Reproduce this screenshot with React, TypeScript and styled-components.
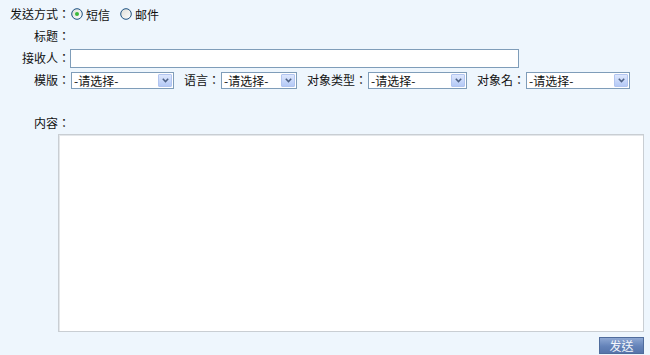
import styled, { createGlobalStyle } from 'styled-components';

const GlobalStyle = createGlobalStyle`
  html, body {
    margin: 0;
    padding: 0;
    background: #eef6fd;
  }
  body {
    font-family: 'Noto Sans CJK TC', 'Noto Sans CJK SC', 'Noto Sans', sans-serif;
    font-size: 12px;
    color: #111;
  }
`;

const Form = styled.form`
  width: 650px;
  height: 355px;
  padding-top: 3px;
  box-sizing: border-box;
  display: flex;
  flex-direction: column;
`;

const Row = styled.div`
  height: 22px;
  display: flex;
  align-items: center;
`;

const Label = styled.span<{ $first?: boolean }>`
  white-space: nowrap;
  line-height: 16px;
  ${(p) =>
    p.$first
      ? 'width: 70px; text-align: right; flex-shrink: 0;'
      : 'margin-left: 10px;'}
`;

const RadioGroup = styled.div`
  display: flex;
  align-items: center;
  gap: 10px;
  margin-left: 1px;
`;

const RadioItem = styled.label`
  display: flex;
  align-items: center;
  gap: 3px;
  svg {
    display: block;
  }
`;

const TextInput = styled.input`
  width: 449px;
  height: 19px;
  box-sizing: border-box;
  border: 1px solid #7f9db9;
  background: #fff;
  outline: none;
  padding: 0 2px;
`;

const SelectBox = styled.div<{ $w: number }>`
  position: relative;
  width: ${(p) => p.$w}px;
  height: 17px;
  margin-left: 1px;
  select {
    width: 100%;
    height: 100%;
    box-sizing: border-box;
    appearance: none;
    border: 1px solid #7f9db9;
    background: #fff;
    padding: 0 0 0 2px;
    font: inherit;
    color: #111;
    line-height: 15px;
    outline: none;
  }
`;

const Arrow = styled.span`
  position: absolute;
  top: 2px;
  right: 2px;
  width: 14px;
  height: 13px;
  box-sizing: border-box;
  border: 1px solid #b2c5f0;
  border-radius: 1px;
  background: linear-gradient(#dde7fd, #b4c9f6);
  pointer-events: none;
  display: flex;
  align-items: center;
  justify-content: center;
`;

const ContentLabelRow = styled.div`
  margin-top: 24px;
  height: 16px;
  display: flex;
  align-items: center;
`;

const ContentArea = styled.textarea`
  margin: 3px 0 0 58px;
  width: 586px;
  height: 198px;
  box-sizing: border-box;
  border: 1px solid #c9ced3;
  box-shadow: inset 1px 1px 0 #e4e7ea;
  background: #fff;
  resize: none;
  outline: none;
`;

const Footer = styled.div`
  display: flex;
  justify-content: flex-end;
  padding-right: 6px;
  margin-top: 5px;
`;

const SendButton = styled.button`
  width: 45px;
  height: 17px;
  padding: 0;
  border: 1px solid #4f6c9c;
  background: linear-gradient(#8ea8d3, #6483b9 55%, #5674aa);
  color: #f4f7fc;
  font: inherit;
  font-size: 12px;
  line-height: 15px;
`;

function Radio({ checked }: { checked?: boolean }) {
  return (
    <svg width="12" height="12" viewBox="0 0 12 12">
      <defs>
        <linearGradient id="rbg" x1="0" y1="0" x2="1" y2="1">
          <stop offset="0" stopColor="#dcdcd6" />
          <stop offset="1" stopColor="#ffffff" />
        </linearGradient>
      </defs>
      <circle cx="6" cy="6" r="5.3" fill="url(#rbg)" stroke="#1d5180" strokeWidth="1" />
      {checked && <circle cx="6" cy="6" r="2" fill="#3ab93a" />}
    </svg>
  );
}

function Select({ w }: { w: number }) {
  return (
    <SelectBox $w={w}>
      <select defaultValue="">
        <option value="">-请选择-</option>
      </select>
      <Arrow>
        <svg width="7" height="5" viewBox="0 0 7 5">
          <path d="M0.8 0.8 L3.5 3.6 L6.2 0.8" fill="none" stroke="#4d6185" strokeWidth="1.5" />
        </svg>
      </Arrow>
    </SelectBox>
  );
}

export default function App() {
  return (
    <>
      <GlobalStyle />
      <Form onSubmit={(e) => e.preventDefault()}>
        <Row>
          <Label $first>发送方式：</Label>
          <RadioGroup>
            <RadioItem>
              <Radio checked />
              短信
            </RadioItem>
            <RadioItem>
              <Radio />
              邮件
            </RadioItem>
          </RadioGroup>
        </Row>
        <Row>
          <Label $first>标题：</Label>
        </Row>
        <Row>
          <Label $first>接收人：</Label>
          <TextInput type="text" />
        </Row>
        <Row>
          <Label $first>模版：</Label>
          <Select w={103} />
          <Label>语言：</Label>
          <Select w={76} />
          <Label>对象类型：</Label>
          <Select w={99} />
          <Label>对象名：</Label>
          <Select w={104} />
        </Row>
        <ContentLabelRow>
          <Label $first>内容：</Label>
        </ContentLabelRow>
        <ContentArea />
        <Footer>
          <SendButton type="submit">发送</SendButton>
        </Footer>
      </Form>
    </>
  );
}
